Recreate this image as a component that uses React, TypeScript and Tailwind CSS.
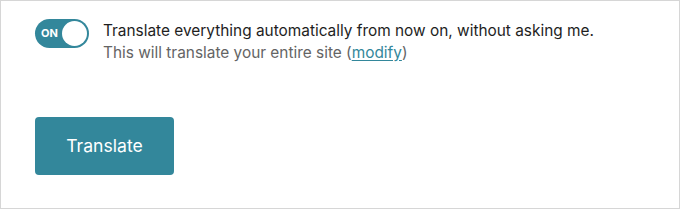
import React, { useState } from 'react';

const App: React.FC = () => {
  const [enabled, setEnabled] = useState(true);

  return (
    <div
      className="w-[680px] h-[209px] bg-white border border-[#d6d6d6] pl-[34px] pt-[17px]"
      style={{ fontFamily: 'Inter, "Noto Sans", sans-serif' }}
    >
      <div className="flex items-start gap-[14px]">
        <button
          type="button"
          onClick={() => setEnabled(!enabled)}
          className="relative mt-[1px] w-[54px] h-[29px] rounded-full bg-[#33879b] shrink-0"
        >
          <span className="absolute left-[6px] top-[7px] text-[11px] leading-[14px] font-bold text-white">
            ON
          </span>
          <span className="absolute right-[2px] top-[2px] w-[25px] h-[25px] rounded-full bg-white" />
        </button>
        <div className="pt-[2px] text-[15.4px] leading-[22px]">
          <p className="text-[#1e1e1e]">
            Translate everything automatically from now on, without asking me.
          </p>
          <p className="text-[#646464]">
            This will translate your entire site (
            <a href="#" className="text-[#33879b] underline underline-offset-2">
              modify
            </a>
            )
          </p>
        </div>
      </div>

      <button
        type="button"
        className="mt-[53px] w-[139px] h-[58px] rounded-[4px] bg-[#33879b] text-white text-[17.6px]"
      >
        Translate
      </button>
    </div>
  );
};

export default App;
